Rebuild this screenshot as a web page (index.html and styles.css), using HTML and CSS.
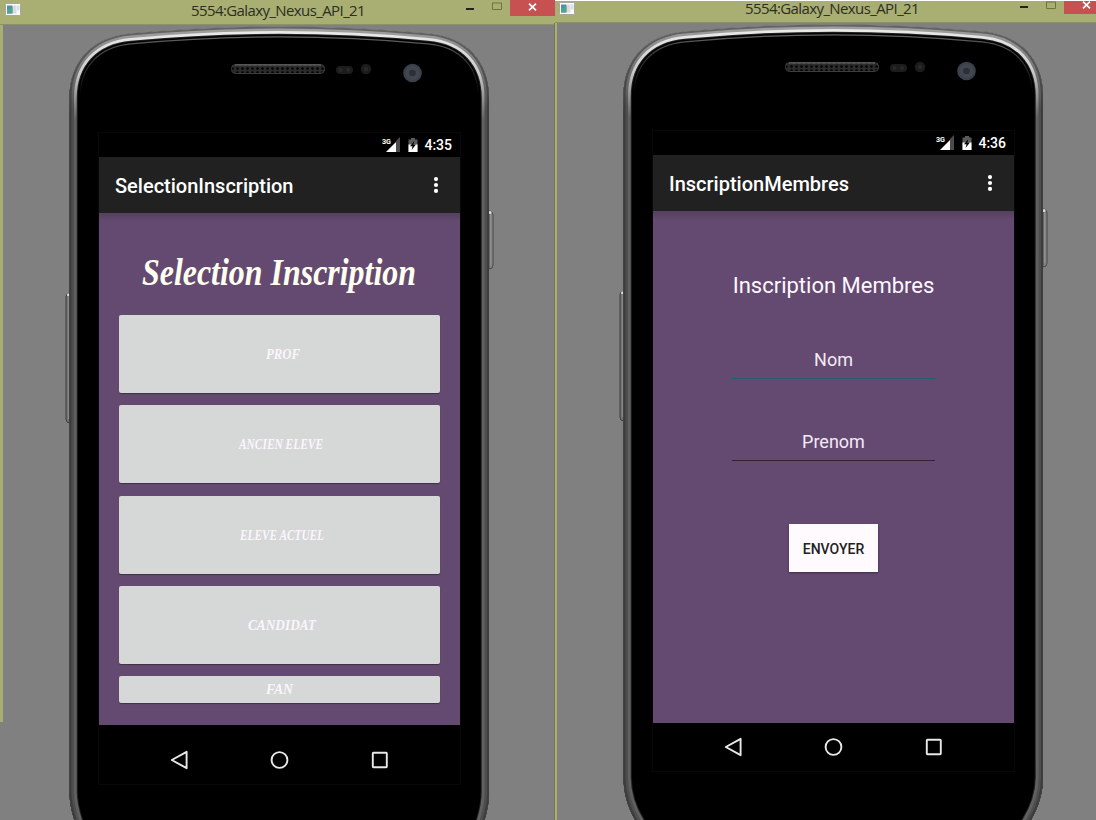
FILE: index.html
```html
<!DOCTYPE html>
<html lang="fr">
<head>
<meta charset="utf-8">
<title>5554:Galaxy_Nexus_API_21</title>
<link rel="stylesheet" href="styles.css">
</head>
<body>
<svg class="defs" aria-hidden="true">
  <defs>
    <linearGradient id="g-outer" gradientUnits="userSpaceOnUse" x1="0" y1="25" x2="0" y2="110"><stop offset="0" stop-color="#666"/><stop offset="1" stop-color="#3d3d3d"/></linearGradient>
    <linearGradient id="g-mid" gradientUnits="userSpaceOnUse" x1="0" y1="25" x2="0" y2="110"><stop offset="0" stop-color="#a4a4a4"/><stop offset="1" stop-color="#4e4e4e"/></linearGradient>
    <linearGradient id="g-light" gradientUnits="userSpaceOnUse" x1="0" y1="25" x2="0" y2="120"><stop offset="0" stop-color="#eee"/><stop offset=".5" stop-color="#ccc"/><stop offset="1" stop-color="#606060"/></linearGradient>
    <linearGradient id="g-line" gradientUnits="userSpaceOnUse" x1="0" y1="25" x2="0" y2="95"><stop offset="0" stop-color="#777"/><stop offset=".4" stop-color="#444"/><stop offset="1" stop-color="#000"/></linearGradient>
    <pattern id="mesh" width="5" height="4" patternUnits="userSpaceOnUse" y="67"><rect width="5" height="4" fill="#2c2c2c"/><circle cx="2.5" cy="1.6" r="1.4" fill="#050505"/></pattern>
    <path id="shape-a" d="M69.500 98C69.500 62 92 37 130 33.500Q279 19.500 429 33.500C467 37 489 62 489 98V792C489 806 486 818 479 836H80C73 818 69.500 806 69.500 792Z"/>
    <path id="shape-b" d="M69.500 98C69.500 62 92 37 130 33.500Q279 19.500 429 33.500C467 37 489 62 489 98V779C489 799 482 818 466 838H92C76 818 69.500 799 69.500 779Z"/>
    <clipPath id="clip-a"><use href="#shape-a"/></clipPath>
    <clipPath id="clip-b"><use href="#shape-b"/></clipPath>
    <g id="side-keys">
      <path d="M70 293h-1q-3 1-3 4V419q0 4 4 4z" fill="#737373" stroke="#3e3e3e"/>
      <path d="M68.500 297V419" stroke="#8a8a8a"/><circle cx="68.500" cy="294.800" r="1.500" fill="#ddd"/>
      <path d="M489 211h1q3 1 3 4V265q0 4-4 4z" fill="#858585" stroke="#484848"/>
      <path d="M490.500 215V265" stroke="#909090"/><circle cx="490" cy="212.500" r="1.500" fill="#ddd"/>
    </g>
    <g id="fittings">
      <rect x="231.500" y="64.500" width="93" height="9" rx="4" fill="url(#mesh)" stroke="#3d3d3d"/>
      <path d="M235 65h86" stroke="#707070"/>
      <rect x="336" y="66" width="17" height="8" rx="4" fill="#1c1c1c"/><circle cx="340.500" cy="70" r="2" fill="#292929"/><circle cx="348" cy="70" r="2" fill="#292929"/>
      <circle cx="366" cy="69" r="5.300" fill="#1c1c1c"/><circle cx="366" cy="69" r="2.200" fill="#292929"/>
      <circle cx="412.500" cy="73" r="9.300" fill="#3b414a"/><circle cx="412.500" cy="73" r="7" fill="#414650"/><circle cx="412.500" cy="73" r="3.300" fill="#2b3036"/>
    </g>
    <symbol id="app-icon" viewBox="0 0 16 13"><rect x=".5" y=".5" width="15" height="12" rx="1" fill="#fafafa" stroke="#aaa798"/><rect x="2" y="2.500" width="5.500" height="8" fill="#4f91ac"/><path d="M2 10.500V7l5.500-3v6.500z" fill="#54a487"/><rect x="8" y="2.500" width="3.500" height="8" fill="#ddd9de"/><rect x="12" y="2.500" width="2.500" height="5" fill="#cfe4e6"/></symbol>
    <symbol id="status-icons" viewBox="0 0 38 16">
      <path d="M18 1v14H4z" fill="#fff"/><path d="M14 4l4-4v15h-4z" fill="#4b4b4b"/>
      <text x="0" y="7" textLength="9" lengthAdjust="spacingAndGlyphs" font-family="Roboto, sans-serif" font-size="8" font-weight="700" fill="#fff" stroke="#000" stroke-width="1.200" paint-order="stroke">3G</text>
      <path d="M29 1h4v1.500h2.500V15h-9V2.500H29z" fill="#5b5b5b"/><path d="M26.500 7.500h9V15h-9z" fill="#fff"/><path d="M32.300 4l-4.300 5.200h2.500L29.600 13l4.300-5.500h-2.500z" fill="#000"/>
    </symbol>
    <symbol id="more" viewBox="0 0 6 16"><circle cx="3" cy="2.100" r="2.100"/><circle cx="3" cy="8" r="2.100"/><circle cx="3" cy="13.900" r="2.100"/></symbol>
    <symbol id="nav-icons" viewBox="0 0 220 20"><g fill="none" stroke="#e8e8e8" stroke-width="1.900"><path d="M16.600 1.800v16.400L1.800 10z" stroke-linejoin="round"/><circle cx="109.500" cy="10" r="7.900"/><rect x="202.800" y="2.800" width="14" height="14.400" rx=".6"/></g></symbol>
  </defs>
</svg>
<main class="desktop">
  <section class="window window-left">
    <header class="titlebar">
      <svg class="app-icon"><use href="#app-icon"/></svg>
      <h1 class="caption">5554:Galaxy_Nexus_API_21</h1>
      <svg class="min" viewBox="0 0 8 2"><path d="M0 1h8" stroke="#222" stroke-width="2"/></svg>
      <svg class="max" viewBox="0 0 10 8"><path d="M.5 1v6.500h9V1M0 1h10" fill="none" stroke="#71743f"/></svg>
      <span class="close"><svg viewBox="0 0 9 8"><path d="M1 .7l7 6.600M8 .7L1 7.300" stroke="#fff" stroke-width="1.700"/></svg></span>
    </header>
    <div class="stage">
      <svg class="phone" viewBox="3 25 551 795" width="551" height="795">
        <use href="#side-keys"/>
        <g clip-path="url(#clip-a)">
          <use href="#shape-a"/>
          <g fill="none"><use href="#shape-a" stroke="url(#g-line)" stroke-width="22"/><use href="#shape-a" stroke="#000" stroke-width="19.500"/><use href="#shape-a" stroke="#222" stroke-width="16.500"/><use href="#shape-a" stroke="url(#g-light)" stroke-width="14.500"/><use href="#shape-a" stroke="url(#g-mid)" stroke-width="9"/><use href="#shape-a" stroke="url(#g-outer)" stroke-width="4"/></g>
        </g>
        <use href="#fittings"/>
      </svg>
      <div class="screen">
        <div class="status"><svg><use href="#status-icons"/></svg><span>4:35</span></div>
        <div class="actionbar"><h2>SelectionInscription</h2><svg><use href="#more"/></svg></div>
        <div class="content choices">
          <svg class="script title"><text x="23" y="42" textLength="274" lengthAdjust="spacingAndGlyphs">Selection Inscription</text></svg>
          <div class="choice"><svg class="script"><text x="147" y="44" textLength="34" lengthAdjust="spacingAndGlyphs">PROF</text></svg></div>
          <div class="choice"><svg class="script"><text x="120" y="44" textLength="84" lengthAdjust="spacingAndGlyphs">ANCIEN ELEVE</text></svg></div>
          <div class="choice"><svg class="script"><text x="121" y="44" textLength="84" lengthAdjust="spacingAndGlyphs">ELEVE ACTUEL</text></svg></div>
          <div class="choice"><svg class="script"><text x="129" y="44" textLength="68" lengthAdjust="spacingAndGlyphs">CANDIDAT</text></svg></div>
          <div class="choice short"><svg class="script"><text x="147" y="18" textLength="27" lengthAdjust="spacingAndGlyphs">FAN</text></svg></div>
        </div>
        <div class="navbar tall"><svg><use href="#nav-icons"/></svg></div>
      </div>
    </div>
  </section>
  <section class="window window-right">
    <header class="titlebar">
      <svg class="app-icon"><use href="#app-icon"/></svg>
      <h1 class="caption">5554:Galaxy_Nexus_API_21</h1>
      <svg class="min" viewBox="0 0 8 2"><path d="M0 1h8" stroke="#222" stroke-width="2"/></svg>
      <svg class="max" viewBox="0 0 10 8"><path d="M.5 1v6.500h9V1M0 1h10" fill="none" stroke="#71743f"/></svg>
      <span class="close"><svg viewBox="0 0 9 8"><path d="M1 .7l7 6.600M8 .7L1 7.300" stroke="#fff" stroke-width="1.700"/></svg></span>
    </header>
    <div class="stage">
      <svg class="phone" viewBox="3 25 539 797" width="539" height="797">
        <use href="#side-keys"/>
        <g clip-path="url(#clip-b)">
          <use href="#shape-b"/>
          <g fill="none"><use href="#shape-b" stroke="url(#g-line)" stroke-width="22"/><use href="#shape-b" stroke="#000" stroke-width="19.500"/><use href="#shape-b" stroke="#222" stroke-width="16.500"/><use href="#shape-b" stroke="url(#g-light)" stroke-width="14.500"/><use href="#shape-b" stroke="url(#g-mid)" stroke-width="9"/><use href="#shape-b" stroke="url(#g-outer)" stroke-width="4"/></g>
        </g>
        <use href="#fittings"/>
      </svg>
      <div class="screen">
        <div class="status"><svg><use href="#status-icons"/></svg><span>4:36</span></div>
        <div class="actionbar"><h2>InscriptionMembres</h2><svg><use href="#more"/></svg></div>
        <form class="content form">
          <h3>Inscription Membres</h3>
          <div class="field focused">Nom</div>
          <div class="field">Prenom</div>
          <button type="button" class="send">ENVOYER</button>
        </form>
        <div class="navbar"><svg><use href="#nav-icons"/></svg></div>
      </div>
    </div>
  </section>
</main>
</body>
</html>
```
FILE: styles.css
```css
* { box-sizing: border-box; }
body { margin: 0; background: #808080; font-family: Roboto, sans-serif; }
h1, h2, h3 { margin: 0; font-weight: 400; }
svg { display: block; flex: none; }
.defs { position: absolute; width: 0; height: 0; }
.desktop { display: flex; width: 1096px; height: 820px; overflow: hidden; }
.window { flex: none; }
.window-left { width: 555px; }
.window-right { width: 541px; border-top: 1px solid #fff; }
.titlebar { display: flex; align-items: flex-start; height: 25px; padding-left: 5px; background: #a9ae73; border-bottom: 1px solid #8d9168; }
.window-right .titlebar { height: 22px; padding-left: 4px; }
.app-icon { width: 16px; height: 13px; margin-top: 3px; }
.window-right .app-icon { margin-top: 1px; }
.caption { width: 176px; margin-left: 170px; font: 15px/20px "Open Sans", sans-serif; letter-spacing: -.6px; white-space: nowrap; color: #2c2e22; }
.window-right .caption { line-height: 14px; }
.min { width: 8px; height: 2px; margin: 8px 0 0 99px; }
.max { width: 10px; height: 8px; margin: 2px 0 0 18px; }
.close { display: flex; justify-content: center; width: 45px; height: 16px; margin-left: 8px; padding-top: 3px; background: #c75050; }
.close svg { width: 9px; height: 8px; }
.window-right .min { margin-top: 5px; }
.window-right .max { margin-top: 0; }
.window-right .close { height: 13px; padding-top: 0; width: 32px; justify-content: flex-start; padding-left: 18px; }
.stage { display: grid; border-left: 3px solid #a9ae73; background: #808080; }
.window-left .stage { border-image: linear-gradient(#a9ae73 697px, #808080 697px) 0 0 0 3; }
.window-right .stage { border-left: 2px solid #a9ae73; box-shadow: -1px 0 #77794f; }
.phone, .screen { grid-area: 1 / 1; }
.screen { width: 361px; margin: 108px 0 0 96px; align-self: start; color: #fff; outline: 1px solid #080808; }
.status { display: flex; justify-content: flex-end; align-items: center; height: 24px; padding-right: 8px; background: #000; font-size: 14px; font-weight: 500; }
.status svg { width: 38px; height: 16px; margin-right: 4px; }
.actionbar { display: flex; align-items: center; justify-content: space-between; height: 56px; padding: 2px 21px 0 16px; background: #212121; }
.actionbar h2 { font-size: 20px; font-weight: 500; line-height: 24px; }
.actionbar svg { width: 6px; height: 16px; margin-top: -2px; fill: #fff; }
.content { display: flex; flex-direction: column; height: 512px; background: linear-gradient(#54405e, #644a71 9px); }
.choices { gap: 12.300px; padding: 30px 20px 0; }
.script { width: 100%; height: 100%; fill: #fbf5fc; font: italic 700 15px "Liberation Serif", serif; }
.title { height: 59.700px; overflow: visible; fill: #fffff0; font-size: 38px; }
.choice { flex: none; height: 78px; background: #d6d8d7; border-radius: 2px; box-shadow: 0 1px 1px rgba(0, 0, 0, .35); }
.short { height: 27px; }
.form { align-items: center; padding-top: 59px; }
.form h3 { font-size: 22px; line-height: 32px; color: #fff8fc; }
.field { width: 203px; height: 37px; margin-top: 40px; padding-top: 6px; border-bottom: 1px solid #2f2533; font-size: 18px; line-height: 24px; text-align: center; color: #f3eaf5; }
.focused { border-bottom: 1px solid #205f6b; }
.focused + .field { margin-top: 45px; }
.send { width: 89px; height: 48px; margin-top: 63px; padding: 2px 0 0; border: 0; background: #fffafd; box-shadow: 0 1px 2px rgba(0, 0, 0, .4); font: 500 14px Roboto, sans-serif; color: #222; }
.navbar { display: flex; justify-content: center; height: 48px; padding-top: 14px; background: #000; }
.tall { height: 59px; padding-top: 25px; }
.navbar svg { width: 220px; height: 20px; }
```
